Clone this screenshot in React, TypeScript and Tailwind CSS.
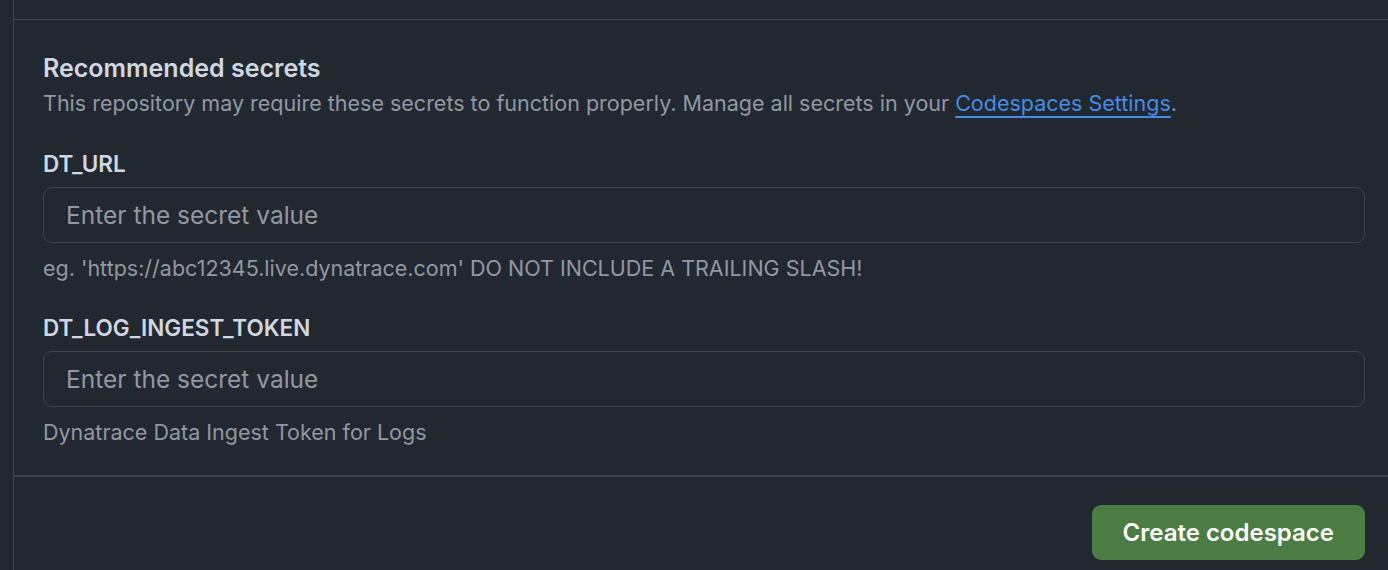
// Codespace creation panel — "Recommended secrets" section + footer action
type Secret = {
  name: string;
  hint: string;
};

const secrets: Secret[] = [
  {
    name: "DT_URL",
    hint: "eg. 'https://abc12345.live.dynatrace.com' DO NOT INCLUDE A TRAILING SLASH!",
  },
  {
    name: "DT_LOG_INGEST_TOKEN",
    hint: "Dynatrace Data Ingest Token for Logs",
  },
];

function SecretField({ secret }: { secret: Secret }) {
  return (
    <div className="flex flex-col">
      <label className="text-[22.5px] leading-[30px] font-semibold text-[#d1d7e0]">
        {secret.name}
      </label>
      <input
        type="password"
        placeholder="Enter the secret value"
        className="mt-2 h-[56px] w-full rounded-[9px] border border-[#3d444d] bg-[#212830] px-[22px] text-[24.5px] text-[#d1d7e0] placeholder:text-[#9198a1] outline-none"
      />
      <p className="mt-[10px] text-[21.5px] leading-[30px] text-[#9198a1]">
        {secret.hint}
      </p>
    </div>
  );
}

export default function App() {
  return (
    <div className="flex h-[570px] overflow-hidden bg-[#212830] font-['Inter',sans-serif]">
      <div className="w-[13px] shrink-0" />
      <div className="flex-1 min-w-0 flex flex-col border-l border-[#3d444d]">
        <div className="h-[20px] shrink-0 border-b border-[#3d444d]" />

        <section className="pl-[29px] pr-[23px] pt-[33px] pb-[28px]">
          <h2 className="text-[25px] leading-[30px] font-semibold text-[#d1d7e0]">
            Recommended secrets
          </h2>
          <p className="mt-[5px] text-[21.5px] leading-[30px] text-[#9198a1]">
            This repository may require these secrets to function properly.
            Manage all secrets in your{" "}
            <a
              href="#"
              className="text-[#478be6] underline decoration-[1.5px] underline-offset-[5px]"
            >
              Codespaces Settings
            </a>
            .
          </p>

          <div className="mt-[31px] flex flex-col gap-[30px]">
            {secrets.map((s) => (
              <SecretField key={s.name} secret={s} />
            ))}
          </div>
        </section>

        <footer className="flex justify-end border-t-2 border-[#3d444d] pt-[28px] pr-[23px]">
          <button className="h-[55px] rounded-[9px] bg-[#4a7c44] px-[31px] text-[24px] font-semibold text-white">
            Create codespace
          </button>
        </footer>
      </div>
    </div>
  );
}
